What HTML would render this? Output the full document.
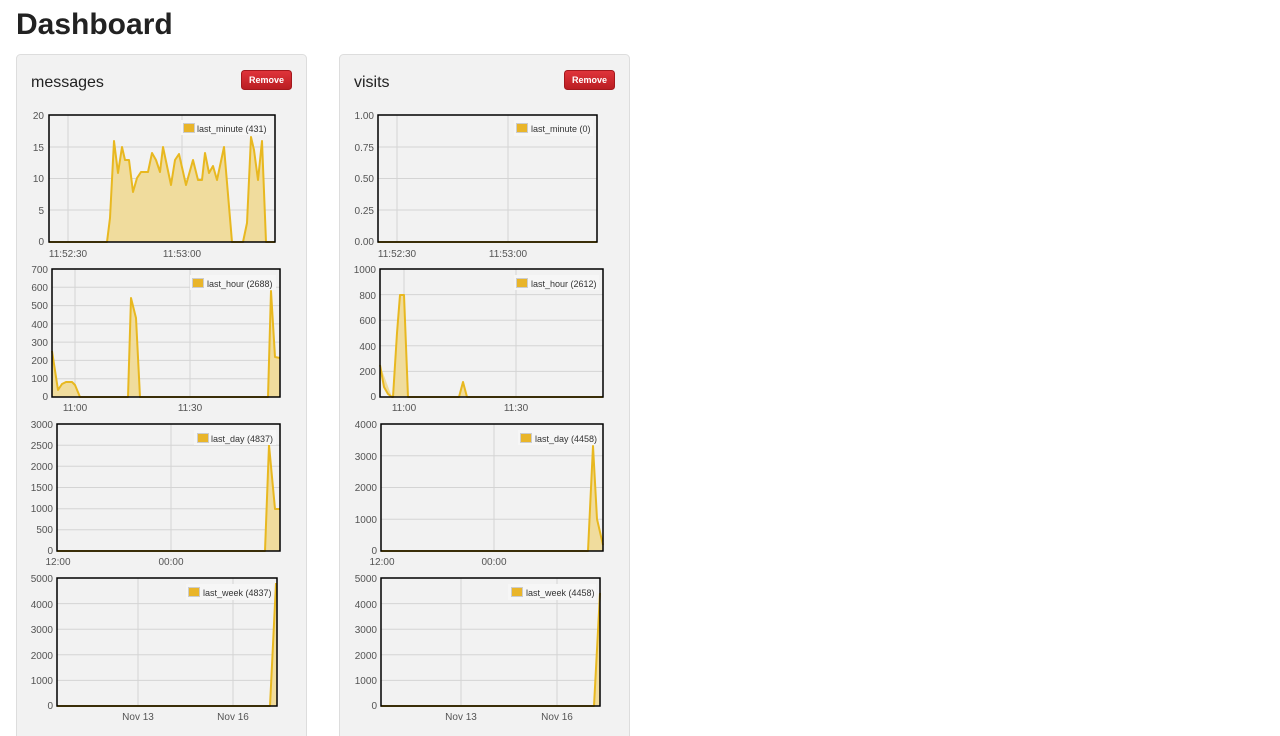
<!DOCTYPE html>
<html><head><meta charset="utf-8"><style>
html,body{margin:0;padding:0;background:#fff;width:1280px;height:736px;overflow:hidden}
svg{display:block}
text{font-family:"Liberation Sans",Arial,sans-serif}
.y{font-size:10px;fill:#545454;text-anchor:end}
.x{font-size:10px;fill:#545454;text-anchor:middle}
.l{font-size:9px;fill:#333}
.g{stroke:#d4d4d4;stroke-width:1}
.b{fill:none;stroke:#000;stroke-width:1.5}
.a{fill:#f0dc9d;stroke:none}
.ln{fill:none;stroke:#e8b820;stroke-width:2;stroke-linejoin:round}
.sw{fill:#e9b52a;stroke:#ccc;stroke-width:1}
</style></head><body>
<svg width="1280" height="736" viewBox="0 0 1280 736">
<text x="16" y="34" style="font-size:30px;font-weight:bold;fill:#222">Dashboard</text>
<defs><linearGradient id="rb" x1="0" y1="0" x2="0" y2="1"><stop offset="0" stop-color="#e0343b"/><stop offset="1" stop-color="#b91d22"/></linearGradient></defs>
<!-- panels -->
<rect x="16.5" y="54.5" width="290" height="700" rx="4" fill="#f2f2f2" stroke="#ddd"/>
<rect x="339.5" y="54.5" width="290" height="700" rx="4" fill="#f2f2f2" stroke="#ddd"/>
<text x="31" y="87" style="font-size:16px;fill:#222">messages</text>
<text x="354" y="87" style="font-size:16px;fill:#222">visits</text>
<rect x="241.5" y="70.5" width="50" height="19" rx="3" fill="url(#rb)" stroke="#a3181d"/>
<text x="266.5" y="83" style="font-size:9px;font-weight:bold;fill:#fff;text-anchor:middle">Remove</text>
<rect x="564.5" y="70.5" width="50" height="19" rx="3" fill="url(#rb)" stroke="#a3181d"/>
<text x="589.5" y="83" style="font-size:9px;font-weight:bold;fill:#fff;text-anchor:middle">Remove</text>

<!-- L1 -->
<g>
<line class="g" x1="49" x2="275" y1="210" y2="210"/><line class="g" x1="49" x2="275" y1="178.5" y2="178.5"/><line class="g" x1="49" x2="275" y1="147" y2="147"/>
<line class="g" x1="68" x2="68" y1="115" y2="242"/><line class="g" x1="182" x2="182" y1="115" y2="242"/>
<path class="a" d="M107,242 L110,218 114,141 118,173 122,147 125,160 129,160 133,192 137,178 141,172 148,172 152,153 156,160 160,172 163,147 171,185 175,160 179,154 186,185 193,160 198,180 202,180 205,153 209,173 213,166 217,180 224,147 232,242 243,242 247,223 251,137 254,150 258,180 262,141 266,242Z"/>
<path class="ln" d="M49,242 L107,242 110,218 114,141 118,173 122,147 125,160 129,160 133,192 137,178 141,172 148,172 152,153 156,160 160,172 163,147 171,185 175,160 179,154 186,185 193,160 198,180 202,180 205,153 209,173 213,166 217,180 224,147 232,242 243,242 247,223 251,137 254,150 258,180 262,141 266,242 275,242"/>
<rect class="b" x="49" y="115" width="226" height="127"/>
<text class="y" x="44" y="119">20</text><text class="y" x="44" y="151">15</text><text class="y" x="44" y="182">10</text><text class="y" x="44" y="214">5</text><text class="y" x="44" y="245">0</text>
<text class="x" x="68" y="257">11:52:30</text><text class="x" x="182" y="257">11:53:00</text>
<rect x="181" y="120" width="89" height="15" fill="#f6f6f6"/><rect class="sw" x="183.5" y="123.5" width="11" height="9"/><text class="l" x="197" y="132">last_minute (431)</text>
</g>
<!-- L2 -->
<g>
<line class="g" x1="52" x2="280" y1="378.7" y2="378.7"/><line class="g" x1="52" x2="280" y1="360.4" y2="360.4"/><line class="g" x1="52" x2="280" y1="342.1" y2="342.1"/><line class="g" x1="52" x2="280" y1="323.9" y2="323.9"/><line class="g" x1="52" x2="280" y1="305.6" y2="305.6"/><line class="g" x1="52" x2="280" y1="287.3" y2="287.3"/>
<line class="g" x1="75" x2="75" y1="269" y2="397"/><line class="g" x1="190" x2="190" y1="269" y2="397"/>
<path class="a" d="M52,351 L58,390 62,384 66,382 72,382 75,385 80,397 52,397Z M128,397 L131,298 136,318 140,397Z M268,397 L271,291 275,357 280,358 280,397Z"/>
<path class="ln" d="M52,351 L58,390 62,384 66,382 72,382 75,385 80,397 128,397 131,298 136,318 140,397 268,397 271,291 275,357 280,358"/>
<rect class="b" x="52" y="269" width="228" height="128"/>
<text class="y" x="48" y="273">700</text><text class="y" x="48" y="291">600</text><text class="y" x="48" y="309">500</text><text class="y" x="48" y="328">400</text><text class="y" x="48" y="346">300</text><text class="y" x="48" y="364">200</text><text class="y" x="48" y="382">100</text><text class="y" x="48" y="400">0</text>
<text class="x" x="75" y="411">11:00</text><text class="x" x="190" y="411">11:30</text>
<rect x="190" y="275" width="86" height="15" fill="#f6f6f6"/><rect class="sw" x="192.5" y="278.5" width="11" height="9"/><text class="l" x="207" y="287">last_hour (2688)</text>
</g>
<!-- L3 -->
<g>
<line class="g" x1="57" x2="280" y1="529.8" y2="529.8"/><line class="g" x1="57" x2="280" y1="508.7" y2="508.7"/><line class="g" x1="57" x2="280" y1="487.5" y2="487.5"/><line class="g" x1="57" x2="280" y1="466.3" y2="466.3"/><line class="g" x1="57" x2="280" y1="445.2" y2="445.2"/>
<line class="g" x1="171" x2="171" y1="424" y2="551"/>
<path class="a" d="M265,551 L269,445 275,509 280,509 280,551Z"/>
<path class="ln" d="M57,551 L265,551 269,445 275,509 280,509"/>
<rect class="b" x="57" y="424" width="223" height="127"/>
<text class="y" x="53" y="428">3000</text><text class="y" x="53" y="449">2500</text><text class="y" x="53" y="470">2000</text><text class="y" x="53" y="491">1500</text><text class="y" x="53" y="512">1000</text><text class="y" x="53" y="533">500</text><text class="y" x="53" y="554">0</text>
<text class="x" x="58" y="565">12:00</text><text class="x" x="171" y="565">00:00</text>
<rect x="194" y="430" width="82" height="15" fill="#f6f6f6"/><rect class="sw" x="197.5" y="433.5" width="11" height="9"/><text class="l" x="211" y="442">last_day (4837)</text>
</g>
<!-- L4 -->
<g>
<line class="g" x1="57" x2="277" y1="680.4" y2="680.4"/><line class="g" x1="57" x2="277" y1="654.8" y2="654.8"/><line class="g" x1="57" x2="277" y1="629.2" y2="629.2"/><line class="g" x1="57" x2="277" y1="603.6" y2="603.6"/>
<line class="g" x1="138" x2="138" y1="578" y2="706"/><line class="g" x1="233" x2="233" y1="578" y2="706"/>
<path class="a" d="M270,706 L276,583 277,583 277,706Z"/>
<path class="ln" d="M57,706 L270,706 276,583"/>
<rect class="b" x="57" y="578" width="220" height="128"/>
<text class="y" x="53" y="582">5000</text><text class="y" x="53" y="608">4000</text><text class="y" x="53" y="633">3000</text><text class="y" x="53" y="659">2000</text><text class="y" x="53" y="684">1000</text><text class="y" x="53" y="709">0</text>
<text class="x" x="138" y="720">Nov 13</text><text class="x" x="233" y="720">Nov 16</text>
<rect x="186" y="584" width="87" height="16" fill="#f6f6f6"/><rect class="sw" x="188.5" y="587.5" width="11" height="9"/><text class="l" x="203" y="596">last_week (4837)</text>
</g>

<!-- R1 -->
<g>
<line class="g" x1="378" x2="597" y1="210" y2="210"/><line class="g" x1="378" x2="597" y1="178.5" y2="178.5"/><line class="g" x1="378" x2="597" y1="147" y2="147"/>
<line class="g" x1="397" x2="397" y1="115" y2="242"/><line class="g" x1="508" x2="508" y1="115" y2="242"/>
<path class="ln" d="M378,242 L597,242"/>
<rect class="b" x="378" y="115" width="219" height="127"/>
<text class="y" x="374" y="119">1.00</text><text class="y" x="374" y="151">0.75</text><text class="y" x="374" y="182">0.50</text><text class="y" x="374" y="214">0.25</text><text class="y" x="374" y="245">0.00</text>
<text class="x" x="397" y="257">11:52:30</text><text class="x" x="508" y="257">11:53:00</text>
<rect x="514" y="120" width="79" height="16" fill="#f6f6f6"/><rect class="sw" x="516.5" y="123.5" width="11" height="9"/><text class="l" x="531" y="132">last_minute (0)</text>
</g>
<!-- R2 -->
<g>
<line class="g" x1="380" x2="603" y1="371.4" y2="371.4"/><line class="g" x1="380" x2="603" y1="345.8" y2="345.8"/><line class="g" x1="380" x2="603" y1="320.2" y2="320.2"/><line class="g" x1="380" x2="603" y1="294.6" y2="294.6"/>
<line class="g" x1="404" x2="404" y1="269" y2="397"/><line class="g" x1="516" x2="516" y1="269" y2="397"/>
<path class="a" d="M380,365 L384,387 388,394 392,397Z M393,397 L397,333 400,295 404,295 408,397Z M459,397 L463,382 467,397Z"/>
<path class="ln" d="M380,365 L384,387 388,394 392,397 393,397 397,333 400,295 404,295 408,397 459,397 463,382 467,397 603,397"/>
<rect class="b" x="380" y="269" width="223" height="128"/>
<text class="y" x="376" y="273">1000</text><text class="y" x="376" y="299">800</text><text class="y" x="376" y="324">600</text><text class="y" x="376" y="350">400</text><text class="y" x="376" y="375">200</text><text class="y" x="376" y="400">0</text>
<text class="x" x="404" y="411">11:00</text><text class="x" x="516" y="411">11:30</text>
<rect x="514" y="275" width="85" height="15" fill="#f6f6f6"/><rect class="sw" x="516.5" y="278.5" width="11" height="9"/><text class="l" x="531" y="287">last_hour (2612)</text>
</g>
<!-- R3 -->
<g>
<line class="g" x1="381" x2="603" y1="519.3" y2="519.3"/><line class="g" x1="381" x2="603" y1="487.5" y2="487.5"/><line class="g" x1="381" x2="603" y1="455.8" y2="455.8"/>
<line class="g" x1="494" x2="494" y1="424" y2="551"/>
<path class="a" d="M588,551 L593,446 597,519 603,545 603,551Z"/>
<path class="ln" d="M381,551 L588,551 593,446 597,519 603,545"/>
<rect class="b" x="381" y="424" width="222" height="127"/>
<text class="y" x="377" y="428">4000</text><text class="y" x="377" y="460">3000</text><text class="y" x="377" y="491">2000</text><text class="y" x="377" y="523">1000</text><text class="y" x="377" y="554">0</text>
<text class="x" x="382" y="565">12:00</text><text class="x" x="494" y="565">00:00</text>
<rect x="518" y="430" width="81" height="15" fill="#f6f6f6"/><rect class="sw" x="520.5" y="433.5" width="11" height="9"/><text class="l" x="535" y="442">last_day (4458)</text>
</g>
<!-- R4 -->
<g>
<line class="g" x1="381" x2="600" y1="680.4" y2="680.4"/><line class="g" x1="381" x2="600" y1="654.8" y2="654.8"/><line class="g" x1="381" x2="600" y1="629.2" y2="629.2"/><line class="g" x1="381" x2="600" y1="603.6" y2="603.6"/>
<line class="g" x1="461" x2="461" y1="578" y2="706"/><line class="g" x1="557" x2="557" y1="578" y2="706"/>
<path class="a" d="M594,706 L600,593 600,706Z"/>
<path class="ln" d="M381,706 L594,706 600,593"/>
<rect class="b" x="381" y="578" width="219" height="128"/>
<text class="y" x="377" y="582">5000</text><text class="y" x="377" y="608">4000</text><text class="y" x="377" y="633">3000</text><text class="y" x="377" y="659">2000</text><text class="y" x="377" y="684">1000</text><text class="y" x="377" y="709">0</text>
<text class="x" x="461" y="720">Nov 13</text><text class="x" x="557" y="720">Nov 16</text>
<rect x="508" y="584" width="88" height="16" fill="#f6f6f6"/><rect class="sw" x="511.5" y="587.5" width="11" height="9"/><text class="l" x="526" y="596">last_week (4458)</text>
</g>
</svg>
</body></html>
